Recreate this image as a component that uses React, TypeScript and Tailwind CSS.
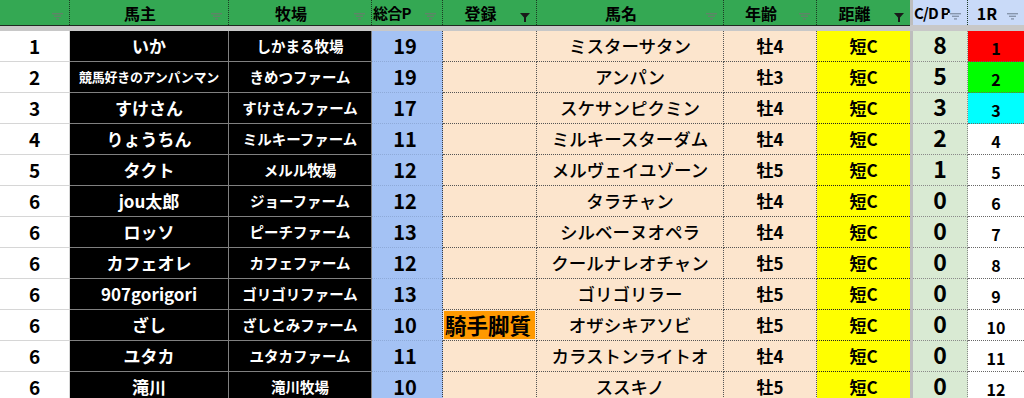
import React from "react";

type Row = {
  rank: string;
  owner: string;
  farm: string;
  pts: string;
  reg: string;
  horse: string;
  age: string;
  dist: string;
  cd: string;
  r1: string;
};

const rows: Row[] = [
  { rank: "1", owner: "いか", farm: "しかまる牧場", pts: "19", reg: "", horse: "ミスターサタン", age: "牡4", dist: "短C", cd: "8", r1: "1" },
  { rank: "2", owner: "競馬好きのアンパンマン", farm: "きめつファーム", pts: "19", reg: "", horse: "アンパン", age: "牡3", dist: "短C", cd: "5", r1: "2" },
  { rank: "3", owner: "すけさん", farm: "すけさんファーム", pts: "17", reg: "", horse: "スケサンピクミン", age: "牡4", dist: "短C", cd: "3", r1: "3" },
  { rank: "4", owner: "りょうちん", farm: "ミルキーファーム", pts: "11", reg: "", horse: "ミルキースターダム", age: "牡4", dist: "短C", cd: "2", r1: "4" },
  { rank: "5", owner: "タクト", farm: "メルル牧場", pts: "12", reg: "", horse: "メルヴェイユゾーン", age: "牡5", dist: "短C", cd: "1", r1: "5" },
  { rank: "6", owner: "jou太郎", farm: "ジョーファーム", pts: "12", reg: "", horse: "タラチャン", age: "牡4", dist: "短C", cd: "0", r1: "6" },
  { rank: "6", owner: "ロッソ", farm: "ピーチファーム", pts: "13", reg: "", horse: "シルベーヌオペラ", age: "牡4", dist: "短C", cd: "0", r1: "7" },
  { rank: "6", owner: "カフェオレ", farm: "カフェファーム", pts: "12", reg: "", horse: "クールナレオチャン", age: "牡5", dist: "短C", cd: "0", r1: "8" },
  { rank: "6", owner: "907gorigori", farm: "ゴリゴリファーム", pts: "13", reg: "", horse: "ゴリゴリラー", age: "牡5", dist: "短C", cd: "0", r1: "9" },
  { rank: "6", owner: "ざし", farm: "ざしとみファーム", pts: "10", reg: "騎手脚質", horse: "オザシキアソビ", age: "牡5", dist: "短C", cd: "0", r1: "10" },
  { rank: "6", owner: "ユタカ", farm: "ユタカファーム", pts: "11", reg: "", horse: "カラストンライトオ", age: "牡4", dist: "短C", cd: "0", r1: "11" },
  { rank: "6", owner: "滝川", farm: "滝川牧場", pts: "10", reg: "", horse: "ススキノ", age: "牡5", dist: "短C", cd: "0", r1: "12" },
];

const r1Bg: Record<string, string> = {
  "1": "bg-[#ff0000]",
  "2": "bg-[#00ff00]",
  "3": "bg-[#00ffff]",
};

// long japanese names get shrunk to fit the cell
const isLong = (s: string) => s.length > 10 && /[^\x00-\x7f]/.test(s);

function SortIcon({ color }: { color: string }) {
  return (
    <svg width="11" height="7" viewBox="0 0 11 7" className={color}>
      <rect x="0" y="0" width="11" height="1.4" fill="currentColor" />
      <rect x="2" y="2.6" width="7" height="1.4" fill="currentColor" />
      <rect x="4" y="5.2" width="3" height="1.4" fill="currentColor" />
    </svg>
  );
}

function FilterIcon() {
  return (
    <svg width="10" height="9" viewBox="0 0 10 9" className="text-[#1a1a1a]">
      <polygon points="0,0 10,0 6,4.5 6,9 4,9 4,4.5" fill="currentColor" />
    </svg>
  );
}

function Head({
  w,
  label,
  bg,
  active,
  sep = true,
  left,
}: {
  w: string;
  label: string;
  bg: string;
  active?: boolean;
  sep?: boolean;
  left?: boolean;
}) {
  const blue = bg === "bg-[#c9daf8]";
  return (
    <div
      className={`relative ${w} ${bg} h-full flex items-center overflow-hidden ${
        left ? "justify-start pl-[1px]" : "justify-center pr-[18px]"
      } ${sep ? "border-r border-dotted border-[#1c3a24]" : ""}`}
    >
      <span
        className={`font-bold text-black leading-none whitespace-nowrap ${
          left ? "text-[15px] tracking-[-0.8px]" : "text-[16px]"
        }`}
      >
        {label}
      </span>
      <span className={`absolute right-[6px] top-[13px] ${bg} pl-[2px]`}>
        {active ? <FilterIcon /> : <SortIcon color={blue ? "text-[#8796ad]" : "text-[#5f8468]"} />}
      </span>
    </div>
  );
}

export default function App() {
  return (
    <div
      className="w-[1024px] h-[398px] overflow-hidden bg-white"
      style={{ fontFamily: '"Noto Sans CJK JP", "Noto Sans", sans-serif' }}
    >
      {/* header */}
      <div className="flex h-[25px]">
        <Head w="w-[70px]" label="" bg="bg-[#34a853]" />
        <Head w="w-[159px]" label="馬主" bg="bg-[#34a853]" />
        <Head w="w-[143px]" label="牧場" bg="bg-[#34a853]" />
        <Head w="w-[71px]" label="総合P" bg="bg-[#34a853]" left />
        <Head w="w-[94px]" label="登録" bg="bg-[#34a853]" active />
        <Head w="w-[187px]" label="馬名" bg="bg-[#34a853]" />
        <Head w="w-[93px]" label="年齢" bg="bg-[#34a853]" />
        <Head w="w-[93px]" label="距離" bg="bg-[#34a853]" active sep={false} />
        <div className="w-[3px] h-full bg-[#bdbdbd]" />
        <Head w="w-[55px]" label="C/D P" bg="bg-[#c9daf8]" left />
        <Head w="w-[56px]" label="1R" bg="bg-[#c9daf8]" sep={false} />
      </div>
      <div className="flex h-[6px]">
        <div className="flex-1 border-t border-[#1f2a22] bg-[#c8c8c8]" />
        <div className="w-[114px] bg-[#c8c8c8]" />
      </div>

      {/* body */}
      {rows.map((r, i) => (
        <div key={i} className="flex h-[31px] font-bold">
          <div className="w-[70px] bg-white border-b border-r border-[#d6d6d6] flex items-center justify-center text-[19px] text-black">
            {r.rank}
          </div>
          <div
            className={`w-[159px] bg-black border-b border-r border-[#808080] flex items-center justify-center text-white whitespace-nowrap ${
              isLong(r.owner) ? "text-[13px] tracking-[-0.3px]" : "text-[17px]"
            }`}
          >
            {r.owner}
          </div>
          <div className="w-[143px] bg-black border-b border-r border-[#808080] flex items-center justify-center text-white text-[14.5px] whitespace-nowrap">
            {r.farm}
          </div>
          <div className="w-[71px] bg-[#a4c2f4] border-b border-[#8eaad8] border-r border-r-[#3c3c3c] border-dotted flex items-center justify-center text-[20px] text-black">
            <span className="pr-[4px]">{r.pts}</span>
          </div>
          {r.reg ? (
            <div className="w-[94px] bg-[#fce5cd] border-b border-r border-dotted border-[#555] p-[1px]">
              <div className="h-full bg-[#ff9900] flex items-center pl-[1px] text-[21.5px] font-semibold text-black whitespace-nowrap">
                {r.reg}
              </div>
            </div>
          ) : (
            <div className="w-[94px] bg-[#fce5cd] border-b border-r border-dotted border-[#555]" />
          )}
          <div className="w-[187px] bg-[#fce5cd] border-b border-r border-dotted border-[#555] flex items-center justify-center text-[17.5px] font-medium text-black whitespace-nowrap overflow-hidden">
            {r.horse}
          </div>
          <div className="w-[93px] bg-[#fce5cd] border-b border-r border-dotted border-[#555] flex items-center justify-center text-[17px] text-black">
            {r.age}
          </div>
          <div className="w-[93px] bg-[#ffff00] border-b border-dotted border-[#222] flex items-center justify-center text-[17px] text-black">
            {r.dist}
          </div>
          <div className="w-[3px] bg-[#bdbdbd]" />
          <div className="w-[55px] bg-[#d9ead3] border-b border-r border-dotted border-[#8a8a8a] flex items-start justify-center pt-[2px] text-[23px] leading-[23px] text-black">
            {r.cd}
          </div>
          <div
            className={`w-[56px] ${r1Bg[r.r1] ?? "bg-white"} border-b border-dotted border-[#666] flex items-center justify-center pt-[4px] text-[16px] text-black`}
          >
            {r.r1}
          </div>
        </div>
      ))}
    </div>
  );
}
